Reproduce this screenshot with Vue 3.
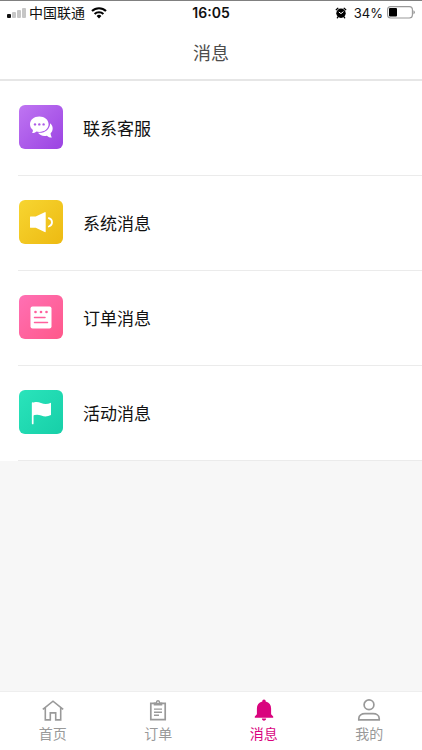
<script setup>
import { ref } from 'vue'

const rows = [
  { id: 'service', label: '联系客服' },
  { id: 'system', label: '系统消息' },
  { id: 'order', label: '订单消息' },
  { id: 'activity', label: '活动消息' },
]
const tabs = [
  { id: 'home', label: '首页' },
  { id: 'orders', label: '订单' },
  { id: 'messages', label: '消息' },
  { id: 'mine', label: '我的' },
]
const active = ref('messages')
</script>

<template>
  <div class="page">
    <div class="status">
      <div class="side">
        <svg class="signal" width="19" height="12" viewBox="0 0 19 12">
          <rect x="0" y="7" width="4" height="4" rx="1" fill="#111" />
          <rect x="5" y="5" width="4" height="6" rx="1" fill="#c6c6c6" />
          <rect x="10" y="3" width="4" height="8" rx="1" fill="#c6c6c6" />
          <rect x="15" y="1" width="4" height="10" rx="1" fill="#c6c6c6" />
        </svg>
        <span class="carrier">中国联通</span>
        <svg class="wifi" width="16" height="12" viewBox="0 0 16 12" fill="none" stroke="#000" stroke-width="2.1">
          <path d="M1 4.1a10 10 0 0 1 14 0" />
          <path d="M3.6 7a6.3 6.3 0 0 1 8.8 0" />
          <path d="M8 11.500 5.600 9a3.300 3.300 0 0 1 4.800 0z" fill="#000" stroke="none" />
        </svg>
      </div>
      <time class="clock">16:05</time>
      <div class="side right">
        <svg class="alarm" width="12" height="12" viewBox="0 0 12 12">
          <circle cx="6" cy="6.300" r="4.700" fill="#000" />
          <path d="M1.200 2.700 2.900 1.300M10.800 2.700 9.100 1.300M3 9.900l-.7.9M9 9.900l.7.9" stroke="#000" stroke-width="1.300" stroke-linecap="round" />
          <path d="M6 6.600 3.800 5M6 6.600l2.500-2" fill="none" stroke="#fff" stroke-width="1" />
        </svg>
        <span class="percent">34%</span>
        <svg width="28" height="13" viewBox="0 0 28 13">
          <rect x=".6" y=".6" width="24.800" height="11.400" rx="3" fill="#fff" stroke="#999" stroke-width="1.100" />
          <rect x="2" y="2" width="8" height="8.600" rx="1" fill="#000" />
          <path d="M26.400 4.200q1.500.6 1.500 2.100t-1.500 2.100z" fill="#999" />
        </svg>
      </div>
    </div>

    <header class="header"><h1>消息</h1></header>

    <main class="list">
      <a v-for="row in rows" :key="row.id" class="row" href="#">
        <span class="tile" :class="row.id">
          <svg v-if="row.id === 'service'" width="44" height="44" viewBox="0 0 44 44">
            <path d="M31.2 18.2c3.4 3 3.1 7.6.4 10.1.1 1.7.5 3 1.3 4.3-2 .1-3.600-.6-5-1.900-3.900.8-7.200-.4-8.900-2.900 6.800.7 12-3.600 12.200-9.600z" fill="#fff" />
            <path d="M20.300 11.500c5.300 0 9.300 3.400 9.300 7.700s-4 7.700-9.300 7.700c-1.100 0-2-.1-2.900-.4-1.200 1-2.500 1.500-4.300 1.500.6-1 .9-2 .8-3.100-1.900-1.400-2.900-3.500-2.900-5.700 0-4.300 4-7.700 9.300-7.700z" fill="#fff" />
            <g fill="#ad5ce7"><circle cx="16" cy="19.400" r="1.200" /><circle cx="20.300" cy="19.400" r="1.200" /><circle cx="24.600" cy="19.400" r="1.200" /></g>
          </svg>
          <svg v-else-if="row.id === 'system'" width="44" height="44" viewBox="0 0 44 44">
            <path d="M11.500 16.500h5.200l9-4.300q1-.4 1 .7v18.600q0 1.100-1 .6L16.700 27.800h-5.200q-.5 0-.5-.5V17q0-.5.5-.5z" fill="#fff" />
            <path d="M29.800 18.100c4.300 1.200 4.300 7.200 0 8.400" fill="none" stroke="#fff" stroke-width="1.800" stroke-linecap="round" />
          </svg>
          <svg v-else-if="row.id === 'order'" width="44" height="44" viewBox="0 0 44 44">
            <rect x="11.500" y="11.500" width="21" height="22" rx="2" fill="#fff" />
            <g fill="#ff5f9d"><circle cx="16.500" cy="17" r="1.300" /><circle cx="22" cy="17" r="1.300" /><circle cx="27.500" cy="17" r="1.300" /></g>
            <path d="M15.500 22.500h10.500M15.500 27.500h13" stroke="#ff5f9d" stroke-width="1.500" stroke-linecap="round" />
          </svg>
          <svg v-else width="44" height="44" viewBox="0 0 44 44">
            <path d="M13.700 13v20.500" stroke="#fff" stroke-width="1.700" stroke-linecap="round" />
            <path d="M13 13.400c3.200-2.100 6-1.700 9-.4 3.400 1.500 6.600 1.200 10-.2v12.300c-3.400 1.700-6.400 1.900-9.800.5-3.200-1.300-5.700-1.200-9.200.3z" fill="#fff" />
          </svg>
        </span>
        <span class="label">{{ row.label }}</span>
      </a>
    </main>

    <nav class="tabs">
      <button v-for="tab in tabs" :key="tab.id" type="button" class="tab" :class="{ active: active === tab.id }" @click="active = tab.id">
        <svg v-if="tab.id === 'home'" width="24" height="24" viewBox="0 0 24 24" fill="none" stroke="currentColor" stroke-width="1.600">
          <path d="M1.800 10.400 12 2.200l10.200 8.200M4.300 8.800V20.900h5v-7h5.400v7h5V8.800" />
        </svg>
        <svg v-else-if="tab.id === 'orders'" width="24" height="24" viewBox="0 0 24 24" fill="none" stroke="currentColor" stroke-width="1.700">
          <path d="M4.800 4.300h14.400v16.400H4.800z" />
          <path d="M7.700 6.500v-3h2.200c0-3.200 4.200-3.200 4.200 0h2.200v3z" fill="currentColor" stroke="none" />
          <path d="M8 10.100h8M8 13.200h8M8 16.300h5" stroke-width="1.400" />
          <circle cx="12" cy="3.200" r=".8" fill="#fff" stroke="none" />
        </svg>
        <svg v-else-if="tab.id === 'messages'" width="24" height="24" viewBox="0 0 24 24" fill="currentColor">
          <path d="M12 .5c1.200 0 1.700.8 1.700 2 3.600.8 5.400 3.500 5.400 7.100v5.700l2.100 2.300v1.200H2.800v-1.200l2.100-2.300V9.600c0-3.600 1.800-6.300 5.400-7.100 0-1.200.5-2 1.700-2zM9.900 19.600h4.200c0 1.400-.9 2.100-2.100 2.100s-2.100-.7-2.100-2.100z" />
        </svg>
        <svg v-else width="24" height="24" viewBox="0 0 24 24" fill="none" stroke="currentColor" stroke-width="1.700">
          <circle cx="12" cy="5.800" r="4.900" />
          <path d="M1.800 20.800v-1.400c0-3.100 3-4.700 6-4.700h8.400c3 0 6 1.600 6 4.700v1.400z" />
        </svg>
        <span>{{ tab.label }}</span>
      </button>
    </nav>
  </div>
</template>

<style>
body {
  margin: 0;
  background: #f7f7f7;
}
</style>

<style scoped>
.page {
  display: flex;
  flex-direction: column;
  min-height: 100vh;
  box-sizing: border-box;
  border-top: 1px solid #808080;
  background: #f7f7f7;
  color: #111;
  font-family: "Liberation Sans", "Noto Sans CJK SC", sans-serif;
}
.status {
  display: flex;
  align-items: center;
  height: 23px;
  padding: 0 7px;
  background: #fff;
  font-size: 14px;
  line-height: 20px;
}
.side {
  display: flex;
  flex: 1;
  align-items: center;
}
.right {
  justify-content: flex-end;
}
.carrier {
  margin: 0 6px 0 3px;
}
.clock {
  font-family: Inter, sans-serif;
  font-weight: 600;
}
.percent {
  margin: 0 4px 0 7px;
  font-family: Inter, sans-serif;
  font-size: 13px;
}
.header {
  display: flex;
  align-items: center;
  justify-content: center;
  box-sizing: border-box;
  height: 57px;
  padding-top: 4px;
  border-bottom: 2px solid #e6e6e6;
  background: #fff;
}
h1 {
  margin: 0;
  color: #4d4d4d;
  font-size: 18px;
  font-weight: 400;
  line-height: 26px;
}
.list {
  display: flex;
  flex-direction: column;
  flex: 1;
}
.row {
  display: flex;
  align-items: center;
  gap: 20px;
  box-sizing: border-box;
  height: 95px;
  padding: 0 0 2px 19px;
  border-bottom: 1px solid transparent;
  background: linear-gradient(#ebebeb, #ebebeb) 18px 100% / 100% 1px no-repeat border-box #fff;
  color: #111;
  font-size: 17px;
  line-height: 26px;
  text-decoration: none;
}
.tile {
  display: flex;
  width: 44px;
  height: 44px;
  border-radius: 6px;
}
.label {
  padding-top: 6px;
}
.service {
  background: linear-gradient(135deg, #bf75f2, #9b43e2);
}
.system {
  background: linear-gradient(135deg, #f7d531, #edba12);
}
.order {
  background: linear-gradient(135deg, #ff70b4, #ff588a);
}
.activity {
  background: linear-gradient(135deg, #2ae4bb, #17cfa8);
}
.tabs {
  display: flex;
  border-top: 1px solid #eee;
  background: #fff;
}
.tab {
  display: flex;
  flex: 1;
  flex-direction: column;
  align-items: center;
  gap: 1px;
  padding: 7px 0 6px;
  border: 0;
  background: none;
  color: #999;
  font: inherit;
  font-size: 14px;
  line-height: 20px;
  cursor: pointer;
}
.active {
  color: #d9047e;
}
</style>
